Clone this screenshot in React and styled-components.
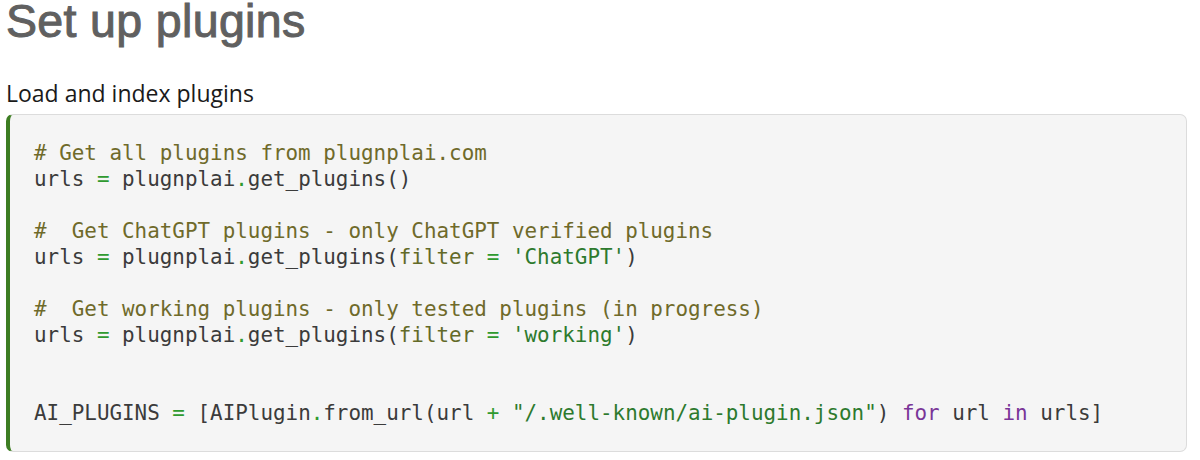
import React from "react";
import styled, { createGlobalStyle } from "styled-components";

const GlobalStyle = createGlobalStyle`
  html, body {
    margin: 0;
    padding: 0;
    background: #ffffff;
  }
  body {
    font-family: "Liberation Sans", Arial, sans-serif;
  }
`;

const Page = styled.div`
  padding: 0 13px 0 6px;
`;

const Title = styled.h1`
  margin: 0;
  font-family: "Liberation Sans", Arial, sans-serif;
  font-size: 46.5px;
  line-height: 42px;
  letter-spacing: 0.35px;
  font-weight: normal;
  color: #606060;
  -webkit-text-stroke: 1px #606060;
`;

const Subtitle = styled.p`
  margin: 36px 0 0;
  font-family: "Open Sans", "Liberation Sans", sans-serif;
  font-size: 23px;
  line-height: 30px;
  color: #1a1a1a;
`;

const CodeBox = styled.pre`
  margin: 6px 0 0;
  padding: 25px 24px;
  background: #f5f5f5;
  border: 1px solid #dcdcdc;
  border-left: 4px solid #3d7d22;
  border-radius: 7px;
  font-family: "DejaVu Sans Mono", "Liberation Mono", monospace;
  font-size: 20.9px;
  line-height: 26px;
  color: #3b3b3b;
  white-space: pre;
  overflow: hidden;
`;

const Tok = styled.span`
  color: ${(p) =>
    p.$k === "comment"
      ? "#6f6a2a"
      : p.$k === "op"
      ? "#2f9a2f"
      : p.$k === "str"
      ? "#2d7a2d"
      : p.$k === "kw"
      ? "#7a3598"
      : p.$k === "arg"
      ? "#636a28"
      : "inherit"};
`;

const Call = ({ arg }) => (
  <>
    urls <Tok $k="op">=</Tok> plugnplai<Tok $k="op">.</Tok>get_plugins(
    {arg && (
      <>
        <Tok $k="arg">filter</Tok> <Tok $k="op">=</Tok> <Tok $k="str">'{arg}'</Tok>
      </>
    )}
    )
  </>
);

export default function App() {
  return (
    <>
      <GlobalStyle />
      <Page>
        <Title>Set up plugins</Title>
        <Subtitle>Load and index plugins</Subtitle>
        <CodeBox>
          <Tok $k="comment"># Get all plugins from plugnplai.com</Tok>
          {"\n"}
          <Call />
          {"\n\n"}
          <Tok $k="comment">#  Get ChatGPT plugins - only ChatGPT verified plugins</Tok>
          {"\n"}
          <Call arg="ChatGPT" />
          {"\n\n"}
          <Tok $k="comment">#  Get working plugins - only tested plugins (in progress)</Tok>
          {"\n"}
          <Call arg="working" />
          {"\n\n\n"}
          AI_PLUGINS <Tok $k="op">=</Tok> [AIPlugin<Tok $k="op">.</Tok>from_url(url{" "}
          <Tok $k="op">+</Tok> <Tok $k="str">"/.well-known/ai-plugin.json"</Tok>){" "}
          <Tok $k="kw">for</Tok> url <Tok $k="kw">in</Tok> urls]
        </CodeBox>
      </Page>
    </>
  );
}
